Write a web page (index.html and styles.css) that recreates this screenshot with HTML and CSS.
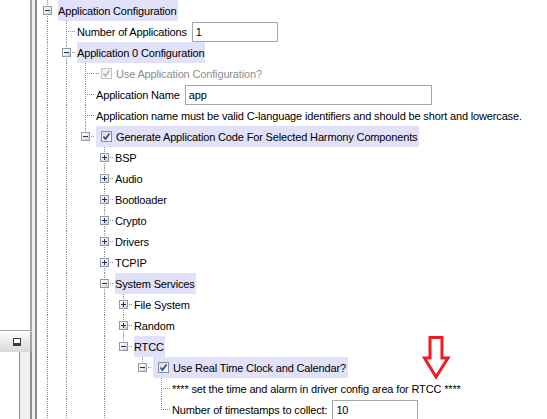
FILE: index.html
```html
<!DOCTYPE html>
<html>
<head>
<meta charset="utf-8">
<link rel="stylesheet" href="styles.css">
</head>
<body>
<div class="app">
  <div class="side">
    <div class="side-top"></div>
    <div class="side-head"><span class="min-btn"></span></div>
    <div class="side-bottom"><div class="sb-white"></div><div class="sb-gray"></div></div>
  </div>
  <div class="sep"></div>
  <div class="divider"></div>
  <div class="tree">
    <div class="row"><span class="c v"><span class="exp"></span></span><span class="lbl hl">Application Configuration</span></div>
    <div class="row"><span class="c v"></span><span class="c t"></span><span class="lbl">Number of Applications</span><span class="field w86">1</span></div>
    <div class="row"><span class="c v"></span><span class="c t"><span class="exp"></span></span><span class="lbl hl">Application 0 Configuration</span></div>
    <div class="row"><span class="c v"></span><span class="c v"></span><span class="c t"></span><span class="lbl chk dis"><span class="cb dis"><svg width="9" height="9" viewBox="0 0 9 9"><path d="M1.5 4.5 L3.5 7 L7.5 1.5" fill="none" stroke="#b8b8b8" stroke-width="1.8"/></svg></span>Use Application Configuration?</span></div>
    <div class="row"><span class="c v"></span><span class="c v"></span><span class="c t"></span><span class="lbl">Application Name</span><span class="field w247">app</span></div>
    <div class="row"><span class="c v"></span><span class="c v"></span><span class="c t"></span><span class="lbl">Application name must be valid C-language identifiers and should be short and lowercase.</span></div>
    <div class="row"><span class="c v"></span><span class="c v"></span><span class="c l"><span class="exp"></span></span><span class="lbl chk hl"><span class="cb"><svg width="9" height="9" viewBox="0 0 9 9"><path d="M1.5 4.5 L3.5 7 L7.5 1.5" fill="none" stroke="#2a4ea6" stroke-width="1.8"/></svg></span>Generate Application Code For Selected Harmony Components</span></div>
    <div class="row"><span class="c v"></span><span class="c v"></span><span class="c"></span><span class="c t"><span class="exp plus"></span></span><span class="lbl">BSP</span></div>
    <div class="row"><span class="c v"></span><span class="c v"></span><span class="c"></span><span class="c t"><span class="exp plus"></span></span><span class="lbl">Audio</span></div>
    <div class="row"><span class="c v"></span><span class="c v"></span><span class="c"></span><span class="c t"><span class="exp plus"></span></span><span class="lbl">Bootloader</span></div>
    <div class="row"><span class="c v"></span><span class="c v"></span><span class="c"></span><span class="c t"><span class="exp plus"></span></span><span class="lbl">Crypto</span></div>
    <div class="row"><span class="c v"></span><span class="c v"></span><span class="c"></span><span class="c t"><span class="exp plus"></span></span><span class="lbl">Drivers</span></div>
    <div class="row"><span class="c v"></span><span class="c v"></span><span class="c"></span><span class="c t"><span class="exp plus"></span></span><span class="lbl">TCPIP</span></div>
    <div class="row"><span class="c v"></span><span class="c v"></span><span class="c"></span><span class="c t"><span class="exp"></span></span><span class="lbl hl">System Services</span></div>
    <div class="row"><span class="c v"></span><span class="c v"></span><span class="c"></span><span class="c v"></span><span class="c t"><span class="exp plus"></span></span><span class="lbl">File System</span></div>
    <div class="row"><span class="c v"></span><span class="c v"></span><span class="c"></span><span class="c v"></span><span class="c t"><span class="exp plus"></span></span><span class="lbl">Random</span></div>
    <div class="row"><span class="c v"></span><span class="c v"></span><span class="c"></span><span class="c v"></span><span class="c l"><span class="exp"></span></span><span class="lbl hl">RTCC</span></div>
    <div class="row"><span class="c v"></span><span class="c v"></span><span class="c"></span><span class="c v"></span><span class="c"></span><span class="c l"><span class="exp"></span></span><span class="lbl chk hl"><span class="cb"><svg width="9" height="9" viewBox="0 0 9 9"><path d="M1.5 4.5 L3.5 7 L7.5 1.5" fill="none" stroke="#2a4ea6" stroke-width="1.8"/></svg></span>Use Real Time Clock and Calendar?</span></div>
    <div class="row"><span class="c v"></span><span class="c v"></span><span class="c"></span><span class="c v"></span><span class="c"></span><span class="c"></span><span class="c t"></span><span class="lbl">**** set the time and alarm in driver config area for RTCC ****</span></div>
    <div class="row"><span class="c v"></span><span class="c v"></span><span class="c"></span><span class="c v"></span><span class="c"></span><span class="c"></span><span class="c l"></span><span class="lbl">Number of timestamps to collect:</span><span class="field w86">10</span></div>
  </div>
  <svg class="arrow" width="30" height="46" viewBox="0 0 30 46"><path d="M8 2.5 H20 V23 H26 L14 42 L2.5 23 H8 Z" fill="#fff" stroke="#ed1c24" stroke-width="3" stroke-linejoin="miter"/></svg>
</div>
</body>
</html>
```

FILE: styles.css
```css
* { box-sizing: border-box; }
html, body { margin: 0; padding: 0; }
body {
  width: 547px;
  height: 419px;
  overflow: hidden;
  background: #fff;
  font-family: "Liberation Sans", Arial, sans-serif;
  font-size: 11px;
  letter-spacing: -0.15px;
  color: #000;
}
.app { display: flex; height: 419px; position: relative; }

.side { width: 32px; flex: none; display: flex; flex-direction: column; }
.side-top { height: 331px; background: #fff; border-right: 2px solid #a4a4a4; border-bottom: 1px solid #a4a4a4; }
.side-head {
  height: 21px;
  background: linear-gradient(#fbfbfb, #d9d9d9);
  border-right: 2px solid #a4a4a4;
  border-top: 1px solid #fff;
  display: flex; align-items: center; justify-content: flex-end;
  padding-right: 9px;
}
.min-btn { width: 8px; height: 8px; border: 1px solid #3a3a3a; background: #fff; box-shadow: inset 0 -2px 0 #3a3a3a; }
.side-bottom { flex: 1; display: flex; }
.sb-white { width: 20px; background: #fff; border-right: 1px solid #8e8e8e; }
.sb-gray { flex: 1; background: #efefef; border-right: 2px solid #8e8e8e; }
.sep { width: 3px; flex: none; background: #f0f0f0; }
.divider { width: 2px; flex: none; background: #8a8a8a; }

.tree { flex: 1; padding-left: 1px; display: flex; flex-direction: column; min-width: 0; }
.row { display: flex; height: 21px; flex: none; align-items: center; }

.c { width: 19px; height: 21px; flex: none; display: flex; align-items: center; justify-content: center; }
.v { background: repeating-linear-gradient(to bottom, #8c8c8c 0 1px, transparent 1px 2px) 9px 0 / 1px 100% no-repeat; }
.t {
  background:
    repeating-linear-gradient(to bottom, #8c8c8c 0 1px, transparent 1px 2px) 9px 0 / 1px 100% no-repeat,
    repeating-linear-gradient(to right, #8c8c8c 0 1px, transparent 1px 2px) 11px 10px / 8px 1px no-repeat;
}
.l {
  background:
    repeating-linear-gradient(to bottom, #8c8c8c 0 1px, transparent 1px 2px) 9px 0 / 1px 11px no-repeat,
    repeating-linear-gradient(to right, #8c8c8c 0 1px, transparent 1px 2px) 11px 10px / 8px 1px no-repeat;
}

.exp {
  width: 9px; height: 9px;
  border: 1px solid #8f9ba7;
  background: linear-gradient(135deg, #ffffff 0%, #f1f1f1 45%, #cdcdcd 100%);
  display: grid; place-items: center;
}
.exp::before { content: ""; grid-area: 1 / 1; width: 5px; height: 1px; background: #1f2f5c; }
.exp.plus::after { content: ""; grid-area: 1 / 1; width: 1px; height: 5px; background: #1f2f5c; }

.lbl { height: 21px; display: flex; align-items: center; margin-left: 1px; padding-right: 1px; white-space: nowrap; }
.hl { background: #e1e1f9; }
.chk { padding-right: 2px; }
.chk:not(.hl) { background: repeating-linear-gradient(to right, #8c8c8c 0 1px, transparent 1px 2px) 0 10px / 4px 1px no-repeat; }
.dis { color: #8d8d8d; }

.cb {
  width: 11px; height: 11px; flex: none;
  margin-left: 5px; margin-right: 4px;
  border: 1px solid #8a8f98;
  background: linear-gradient(135deg, #d9d9d9, #ffffff);
  display: grid; place-items: center;
}
.cb.dis { border-color: #c2c2c2; background: linear-gradient(135deg, #ececec, #ffffff); }
.cb svg { display: block; }

.field {
  height: 20px;
  border: 1px solid #a6a6a6;
  background: #fff;
  padding-left: 3px;
  margin-left: 4px;
  display: flex; align-items: center;
  flex: none;
}
.w86 { width: 86px; }
.w247 { width: 247px; }

.arrow { position: absolute; left: 422px; top: 335px; }
```
